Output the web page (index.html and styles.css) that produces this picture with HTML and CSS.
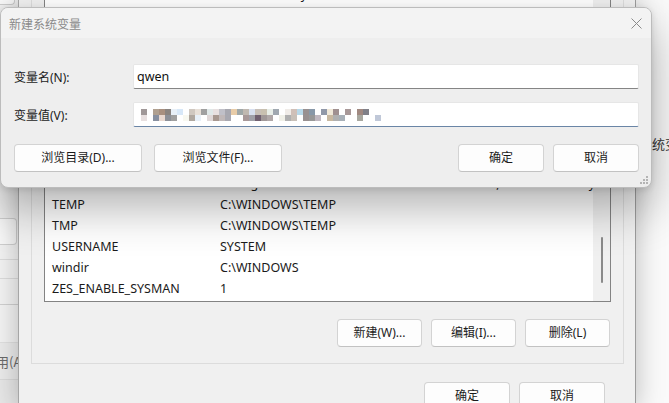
FILE: index.html
```html
<!DOCTYPE html>
<html lang="zh-CN">
<head>
<meta charset="utf-8">
<title>新建系统变量</title>
<link rel="stylesheet" href="styles.css">
</head>
<body>
<div class="desk">
  <!-- sliver of the System Properties window on the left -->
  <div class="back-left">
    <div class="bl-top"></div>
    <div class="bl-box"></div>
    <div class="bl-line l1"></div>
    <div class="bl-line l2"></div>
    <div class="bl-line l3"></div>
    <div class="bl-band"><span>应用(A)</span></div>
    <div class="bl-foot"></div>
  </div>

  <!-- Environment Variables window -->
  <div class="env">
    <div class="group">
      <div class="list">
        <div class="rows">
          <div class="row"><span class="k">ComSpec</span><span class="v">C:\WINDOWS\system32\cmd.exe</span></div>
          <div class="row"><span class="k">DriverData</span><span class="v">C:\Windows\System32\Drivers\DriverData</span></div>
          <div class="row"><span class="k">NUMBER_OF_PROCESSORS</span><span class="v">16</span></div>
          <div class="row"><span class="k">OS</span><span class="v">Windows_NT</span></div>
          <div class="row"><span class="k">Path</span><span class="v">C:\WINDOWS\system32;C:\WINDOWS;C:\WINDOWS\System32\Wbem;</span></div>
          <div class="row"><span class="k">PATHEXT</span><span class="v">.COM;.EXE;.BAT;.CMD;.VBS;.VBE;.JS;.JSE;.WSF;.WSH;.MSC</span></div>
          <div class="row"><span class="k">PROCESSOR_ARCHITECTURE</span><span class="v">AMD64</span></div>
          <div class="row"><span class="k">PROCESSOR_IDENTIFIER</span><span class="v">Intel64 Family 6 Model 154 Stepping 3, GenuineIntel</span></div>
          <div class="row"><span class="k">PROCESSOR_LEVEL</span><span class="v">6</span></div>
          <div class="row"><span class="k">PROCESSOR_REVISION</span><span class="v">9a03</span></div>
          <div class="row"><span class="k">PSModulePath</span><span class="v">%ProgramFiles%\WindowsPowerShell\Modules;C:\WINDOWS\system32\Windo</span></div>
          <div class="row"><span class="k">TEMP</span><span class="v">C:\WINDOWS\TEMP</span></div>
          <div class="row"><span class="k">TMP</span><span class="v">C:\WINDOWS\TEMP</span></div>
          <div class="row"><span class="k">USERNAME</span><span class="v">SYSTEM</span></div>
          <div class="row"><span class="k">windir</span><span class="v">C:\WINDOWS</span></div>
          <div class="row"><span class="k">ZES_ENABLE_SYSMAN</span><span class="v">1</span></div>
        </div>
        <div class="scroll"><div class="thumb"></div></div>
      </div>
      <div class="actions">
        <button class="btn w85">新建(W)...</button>
        <button class="btn w85">编辑(I)...</button>
        <button class="btn w85">删除(L)</button>
      </div>
    </div>
    <div class="env-foot">
      <button class="btn w86">确定</button>
      <button class="btn w86">取消</button>
    </div>
  </div>

  <div class="back-right"><span class="back-text">统变量</span></div>
</div>

<!-- New System Variable dialog -->
<div class="dialog">
  <div class="titlebar">
    <span class="title">新建系统变量</span>
    <svg class="close" width="11" height="11" viewBox="0 0 11 11">
      <path d="M0.5 0.5 L10.5 10.5 M10.5 0.5 L0.5 10.5" stroke="#8a8a8a" stroke-width="1" fill="none"/>
    </svg>
  </div>
  <div class="body">
    <div class="form">
      <label class="lbl">变量名(N):</label>
      <div class="field">qwen</div>
      <label class="lbl">变量值(V):</label>
      <div class="field focus">
        <svg class="mosaic" width="246" height="12" viewBox="0 0 246 12">
          <g>
            <rect x="0" y="0" width="6" height="6" fill="#a09898"/>
            <rect x="12" y="0" width="6" height="6" fill="#b0a090"/>
            <rect x="18" y="0" width="6" height="6" fill="#a89080"/>
            <rect x="24" y="0" width="6" height="6" fill="#8a8480"/>
            <rect x="30" y="0" width="6" height="6" fill="#e8f0f8"/>
            <rect x="36" y="0" width="6" height="6" fill="#d8e8f8"/>
            <rect x="48" y="0" width="6" height="6" fill="#d0c8c0"/>
            <rect x="54" y="0" width="6" height="6" fill="#e8e0d8"/>
            <rect x="60" y="0" width="6" height="6" fill="#a0a0a0"/>
            <rect x="66" y="0" width="6" height="6" fill="#e0e8e8"/>
            <rect x="72" y="0" width="6" height="6" fill="#e8e0e0"/>
            <rect x="78" y="0" width="6" height="6" fill="#c0c0c8"/>
            <rect x="84" y="0" width="6" height="6" fill="#a8a8b0"/>
            <rect x="90" y="0" width="6" height="6" fill="#e8cca8"/>
            <rect x="96" y="0" width="6" height="6" fill="#a0a8a8"/>
            <rect x="102" y="0" width="6" height="6" fill="#c0b8b0"/>
            <rect x="108" y="0" width="6" height="6" fill="#d8e0f0"/>
            <rect x="114" y="0" width="6" height="6" fill="#c8c0b8"/>
            <rect x="120" y="0" width="6" height="6" fill="#c8c0b0"/>
            <rect x="126" y="0" width="6" height="6" fill="#e8eee8"/>
            <rect x="132" y="0" width="6" height="6" fill="#a0a8b0"/>
            <rect x="144" y="0" width="6" height="6" fill="#f0ece8"/>
            <rect x="150" y="0" width="6" height="6" fill="#d0c0b8"/>
            <rect x="156" y="0" width="6" height="6" fill="#b8d8e8"/>
            <rect x="162" y="0" width="6" height="6" fill="#989090"/>
            <rect x="168" y="0" width="6" height="6" fill="#8898a8"/>
            <rect x="180" y="0" width="6" height="6" fill="#9098a8"/>
            <rect x="186" y="0" width="6" height="6" fill="#f0e8d8"/>
            <rect x="192" y="0" width="6" height="6" fill="#a09090"/>
            <rect x="204" y="0" width="6" height="6" fill="#a89898"/>
            <rect x="216" y="0" width="6" height="6" fill="#a08880"/>
            <rect x="222" y="0" width="6" height="6" fill="#808088"/>
          </g>
          <g>
            <rect x="0" y="6" width="6" height="6" fill="#e8e0e0"/>
            <rect x="12" y="6" width="6" height="6" fill="#8890a0"/>
            <rect x="18" y="6" width="6" height="6" fill="#e8d8d0"/>
            <rect x="24" y="6" width="6" height="6" fill="#8c9098"/>
            <rect x="30" y="6" width="6" height="6" fill="#a0a0a0"/>
            <rect x="42" y="6" width="6" height="6" fill="#f8f8f0"/>
            <rect x="48" y="6" width="6" height="6" fill="#b0a8a0"/>
            <rect x="54" y="6" width="6" height="6" fill="#e8f0f8"/>
            <rect x="66" y="6" width="6" height="6" fill="#e0d8d8"/>
            <rect x="72" y="6" width="6" height="6" fill="#a89890"/>
            <rect x="78" y="6" width="6" height="6" fill="#c0b8b8"/>
            <rect x="84" y="6" width="6" height="6" fill="#a8a8b0"/>
            <rect x="102" y="6" width="6" height="6" fill="#a89898"/>
            <rect x="108" y="6" width="6" height="6" fill="#a0a0a8"/>
            <rect x="114" y="6" width="6" height="6" fill="#706070"/>
            <rect x="120" y="6" width="6" height="6" fill="#a09898"/>
            <rect x="126" y="6" width="6" height="6" fill="#b0a8a8"/>
            <rect x="138" y="6" width="6" height="6" fill="#f0f0e8"/>
            <rect x="144" y="6" width="6" height="6" fill="#b0b0b0"/>
            <rect x="150" y="6" width="6" height="6" fill="#c8c0b8"/>
            <rect x="162" y="6" width="6" height="6" fill="#989090"/>
            <rect x="168" y="6" width="6" height="6" fill="#989898"/>
            <rect x="174" y="6" width="6" height="6" fill="#c0b8c0"/>
            <rect x="186" y="6" width="6" height="6" fill="#c8b8a0"/>
            <rect x="192" y="6" width="6" height="6" fill="#b0b0b0"/>
            <rect x="198" y="6" width="6" height="6" fill="#a8b0b8"/>
            <rect x="216" y="6" width="6" height="6" fill="#a8a8a0"/>
            <rect x="234" y="6" width="6" height="6" fill="#c0c8d8"/>
          </g>
        </svg>
      </div>
    </div>
    <div class="buttons">
      <button class="btn w128">浏览目录(D)...</button>
      <button class="btn w128">浏览文件(F)...</button>
      <span class="spacer"></span>
      <button class="btn w86">确定</button>
      <button class="btn w86">取消</button>
    </div>
  </div>
  <svg class="grip" width="9" height="9" viewBox="0 0 9 9">
    <rect x="6" y="0" width="2" height="2" fill="#b4b4b4"/>
    <rect x="3" y="3" width="2" height="2" fill="#b4b4b4"/>
    <rect x="6" y="3" width="2" height="2" fill="#b4b4b4"/>
    <rect x="0" y="6" width="2" height="2" fill="#b4b4b4"/>
    <rect x="3" y="6" width="2" height="2" fill="#b4b4b4"/>
    <rect x="6" y="6" width="2" height="2" fill="#b4b4b4"/>
  </svg>
</div>
</body>
</html>
```

FILE: styles.css
```css
* { box-sizing: border-box; }

html, body {
  margin: 0;
  padding: 0;
}

body {
  width: 669px;
  height: 403px;
  overflow: hidden;
  position: relative;
  background: #f9f9f9;
  font-family: "Noto Sans", "Noto Sans CJK SC", sans-serif;
  font-size: 12px;
  color: #1b1b1b;
}

.desk {
  display: grid;
  grid-template-columns: 18px 618px 33px;
  height: 403px;
  overflow: hidden;
}

/* ---------- window behind, left edge ---------- */
.back-left {
  background: #f3f3f3;
  display: flex;
  flex-direction: column;
  overflow: hidden;
}
.bl-top {
  height: 5px;
  margin-right: 3px;
  border-right: 1px solid #cfcfcf;
  border-bottom: 1px solid #cfcfcf;
  border-bottom-right-radius: 4px;
  background: #fbfbfb;
}
.bl-box {
  margin-top: 213px;
  height: 27px;
  margin-right: 1px;
  border: 1px solid #d2d2d2;
  border-left: none;
  border-radius: 0 4px 4px 0;
  background: #fbfbfb;
}
.bl-line { height: 1px; background: #dcdcdc; }
.bl-line.l1 { margin-top: 14px; }
.bl-line.l2 { margin-top: 18px; }
.bl-line.l3 { margin-top: 25px; background: #d0d0d0; }
.bl-band {
  margin-top: 37px;
  height: 38px;
  background: #ebebeb;
  border-top: 1px solid #e0e0e0;
  border-bottom: 1px solid #dadada;
  display: flex;
  align-items: center;
  overflow: hidden;
  white-space: nowrap;
}
.bl-band span {
  font-family: "Noto Sans CJK SC", sans-serif;
  font-size: 13px;
  color: #6a6a6a;
  margin-left: -17px;
}
.bl-foot { flex: 1; background: #e7e7e7; }

/* ---------- Environment Variables window ---------- */
.env {
  position: relative;
  z-index: 1;
  background: #f0f0f0;
  border-left: 1px solid #a6a6a6;
  border-right: 1px solid #9c9c9c;
  box-shadow: 0 0 26px rgba(0, 0, 0, 0.26);
  padding: 0 11px 0 12px;
  display: flex;
  flex-direction: column;
}

.group {
  margin-top: -60px;
  border: 1px solid #dcdcdc;
  padding: 19px 12px 16px 12px;
}

.list {
  display: flex;
  border: 1px solid #838383;
  background: #ffffff;
}
.rows {
  flex: 1;
  padding: 2px 0 2px 0;
  overflow: hidden;
}
.row {
  height: 21px;
  display: flex;
  align-items: center;
  padding-left: 7px;
  white-space: nowrap;
  line-height: 21px;
  font-size: 12.5px;
}
.row .k { width: 168px; flex: none; }
.row .v { flex: none; }

.scroll {
  width: 17px;
  background: #f0f0f0;
  padding-left: 8px;
}
.thumb {
  width: 2px;
  height: 46px;
  margin-top: 276px;
  background: #8a8a8a;
  border-radius: 1px;
}

.actions {
  display: flex;
  justify-content: flex-end;
  gap: 9px;
  margin-top: 17px;
  padding-right: 1px;
}

.env-foot {
  display: flex;
  justify-content: flex-end;
  gap: 9px;
  margin-top: 18px;
  padding-right: 19px;
}

/* ---------- window behind, right edge ---------- */
.back-right {
  background: #fafafa;
  padding: 134px 0 0 16px;
  overflow: hidden;
  white-space: nowrap;
}
.back-text {
  font-family: "Noto Sans CJK SC", sans-serif;
  font-size: 13px;
  color: #333;
}

/* ---------- buttons ---------- */
.btn {
  height: 28px;
  padding: 0;
  font: inherit;
  font-size: 12px;
  color: #1b1b1b;
  background: #fdfdfd;
  border: 1px solid #d3d3d3;
  border-bottom-color: #c2c2c2;
  border-radius: 4px;
  flex: none;
  line-height: 26px;
}
.w85 { width: 85px; }
.w86 { width: 86px; }
.w128 { width: 128px; }

/* ---------- dialog ---------- */
.dialog {
  position: absolute;
  left: 0;
  top: 7px;
  width: 652px;
  height: 181px;
  z-index: 5;
  background: #eeeeee;
  border: 1px solid #bcbcbc;
  border-radius: 8px;
  box-shadow: 0 20px 46px rgba(0, 0, 0, 0.3), 0 2px 6px rgba(0, 0, 0, 0.1);
  overflow: hidden;
}

.titlebar {
  height: 30px;
  background: #f3f3f3;
  display: flex;
  align-items: center;
  justify-content: space-between;
  padding: 0 9px 0 8px;
}
.title {
  color: #8a8a8a;
  font-family: "Noto Sans CJK SC", sans-serif;
  font-size: 12px;
}
.close { display: block; }

.body {
  padding: 26px 12px 0 13px;
}

.form {
  display: grid;
  grid-template-columns: 119px 1fr;
  row-gap: 13px;
  align-items: center;
}
.lbl {
  font-size: 12px;
  color: #1b1b1b;
  white-space: nowrap;
}
.field {
  height: 25px;
  background: #ffffff;
  border: 1px solid #e6e6e6;
  border-bottom-color: #858585;
  border-radius: 2px;
  padding: 0 0 0 3px;
  display: flex;
  align-items: center;
  font-size: 12.5px;
  color: #111;
}
.field.focus {
  border-bottom: 1px solid #6a85a6;
  padding-left: 7px;
  padding-top: 1px;
}
.mosaic { display: block; }

.buttons {
  display: flex;
  gap: 12px;
  margin-top: 17px;
}
.buttons .spacer { flex: 1; }
.buttons .w86 + .w86 { margin-left: -3px; }

.grip {
  position: absolute;
  right: 2px;
  bottom: 2px;
}
```
